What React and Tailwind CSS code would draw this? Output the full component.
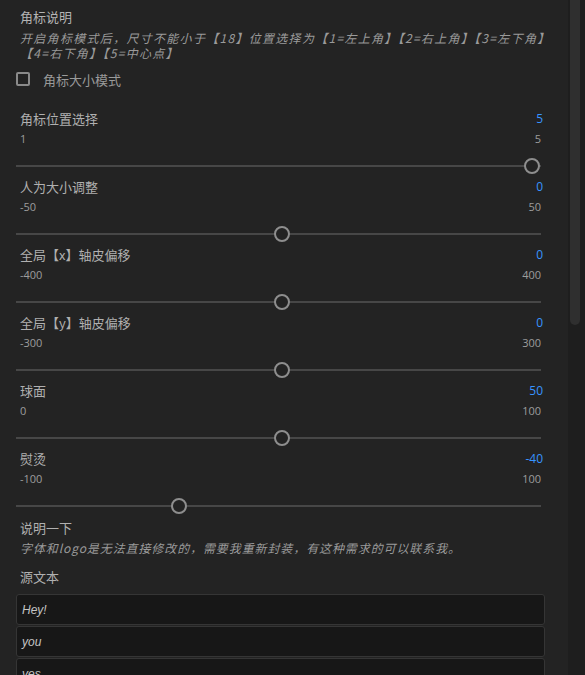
import React from "react";

const sliders = [
  { label: "角标位置选择", value: "5", min: "1", max: "5", x: 532 },
  { label: "人为大小调整", value: "0", min: "-50", max: "50", x: 282 },
  { label: "全局【x】轴皮偏移", value: "0", min: "-400", max: "400", x: 282 },
  { label: "全局【y】轴皮偏移", value: "0", min: "-300", max: "300", x: 282 },
  { label: "球面", value: "50", min: "0", max: "100", x: 282 },
  { label: "熨烫", value: "-40", min: "-100", max: "100", x: 179 },
];

const cjk = { fontFamily: '"Noto Sans CJK SC", "Liberation Sans", sans-serif' };
const num = { fontFamily: '"Open Sans", "Liberation Sans", sans-serif' };

function Slider({ s }) {
  return (
    <div className="flex h-[68px] w-[529px] flex-col">
      <div className="flex h-5 items-center justify-between pl-1 pr-[2px]">
        <span className="text-[13px] text-[#b0b0b0]" style={cjk}>{s.label}</span>
        <span className="text-[12px] text-[#3794ff]" style={num}>{s.value}</span>
      </div>
      <div className="flex h-5 items-center justify-between pl-1 pr-[4px]">
        <span className="text-[11px] text-[#9d9d9d]" style={num}>{s.min}</span>
        <span className="text-[11px] text-[#9d9d9d]" style={num}>{s.max}</span>
      </div>
      <div className="relative h-[28px] w-[525px]">
        <div className="mt-[16px] h-[2px] w-full bg-[#474747]" />
        <div
          className="absolute top-[9px] h-4 w-4 rounded-full border-2 border-[#8e8e8e] bg-[#232323]"
          style={{ left: s.x - 16 - 8 }}
        />
      </div>
    </div>
  );
}

export default function App() {
  return (
    <div className="flex h-[675px] w-[585px] overflow-hidden bg-[#232323]">
      <div className="flex w-[568px] flex-col pl-4 pt-[7px]">
        <div className="flex h-5 items-center pl-1 text-[13px] text-[#b4b4b4]" style={cjk}>角标说明</div>
        <div className="mt-[3px] pl-1 text-[12px] italic leading-[15px] tracking-[1.3px] text-[#9a9a9a]" style={cjk}>
          <div className="whitespace-nowrap">开启角标模式后，尺寸不能小于【18】位置选择为【1=左上角】【2=右上角】【3=左下角】</div>
          <div className="whitespace-nowrap">【4=右下角】【5=中心点】</div>
        </div>
        <div className="mt-[10px] flex h-5 items-center">
          <div className="h-[14px] w-[14px] rounded-[2px] border-2 border-[#8a8a8a]" />
          <span className="ml-[13px] text-[13px] text-[#9a9a9a]" style={cjk}>角标大小模式</span>
        </div>
        <div className="mt-5 flex flex-col">
          {sliders.map((s, i) => (
            <Slider key={i} s={s} />
          ))}
        </div>
        <div className="mt-[1px] flex h-5 items-center pl-1 text-[13px] text-[#b0b0b0]" style={cjk}>说明一下</div>
        <div className="mt-[1px] flex h-5 items-center pl-1 text-[12px] italic tracking-[0.9px] text-[#9a9a9a]" style={cjk}>
          字体和logo是无法直接修改的，需要我重新封装，有这种需求的可以联系我。
        </div>
        <div className="mt-[10px] flex h-5 items-center pl-1 text-[13px] text-[#b0b0b0]" style={cjk}>源文本</div>
        <div className="mt-2 flex w-[529px] flex-col gap-[1px]">
          {["Hey!", "you", "yes"].map((t) => (
            <div
              key={t}
              className="flex h-[31px] items-center rounded-[3px] border border-[#353535] bg-[#171717] pl-[5px] text-[12px] italic text-[#c4c4c4]"
              style={{ fontFamily: '"Liberation Sans", sans-serif' }}
            >
              {t}
            </div>
          ))}
        </div>
      </div>
      <div className="flex w-[17px] bg-[#1e1e1e]">
        <div className="ml-[2px] h-[325px] w-[10px] rounded-b-[5px] bg-[#2f2f2f]" />
      </div>
    </div>
  );
}
